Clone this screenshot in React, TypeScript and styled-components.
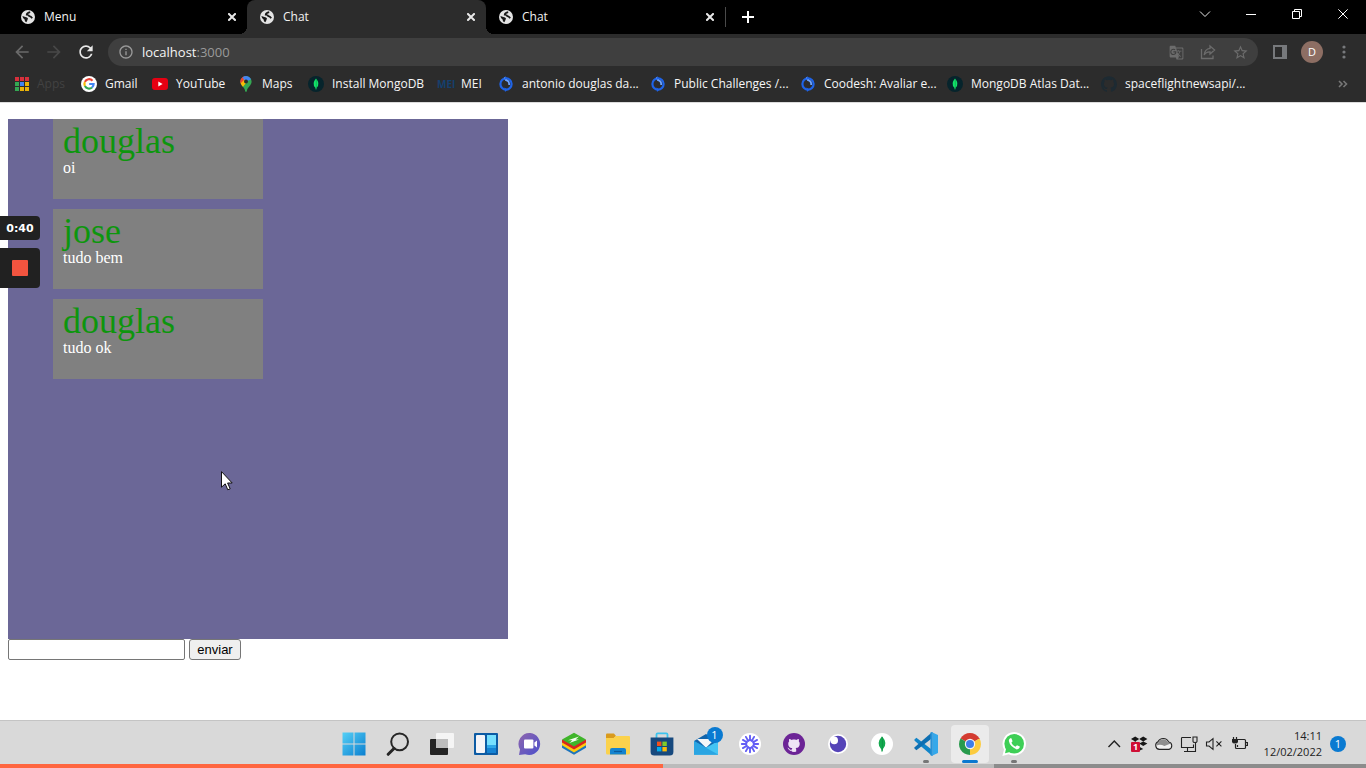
import React from "react";
import styled, { createGlobalStyle } from "styled-components";
import { SiGithub } from "react-icons/si";
import { MdGTranslate, MdStarBorder, MdRefresh, MdArrowBack, MdArrowForward, MdInfoOutline } from "react-icons/md";

const ui = `"Open Sans", "Noto Sans", sans-serif`;

const GlobalStyle = createGlobalStyle`
  *, *::before, *::after { box-sizing: border-box; }
  body { margin: 0; background: #fff; }
  button { font: inherit; color: inherit; }
`;

const Screen = styled.div`
  position: relative;
  min-height: 100vh;
  display: flex;
  flex-direction: column;
  font-family: ${ui};
`;

const TabStrip = styled.div`
  height: 34px;
  padding-left: 8px;
  display: flex;
  align-items: stretch;
  background: #000;
  color: #f2f2f2;
`;

const Tab = styled.div<{ $active?: boolean }>`
  position: relative;
  flex: 0 1 239px;
  display: flex;
  align-items: center;
  gap: 9px;
  padding: 0 7px 0 13px;
  font-size: 12px;
  line-height: 16px;
  background: ${(p) => (p.$active ? "#2c2c2c" : "transparent")};
  border-radius: 8px 8px 0 0;
  z-index: ${(p) => (p.$active ? 1 : 0)};
  &::before,
  &::after {
    content: "";
    display: ${(p) => (p.$active ? "block" : "none")};
    position: absolute;
    bottom: 0;
    width: 8px;
    height: 8px;
  }
  &::before {
    right: 100%;
    background: radial-gradient(circle at 0 0, transparent 8px, #2c2c2c 8px);
  }
  &::after {
    left: 100%;
    background: radial-gradient(circle at 100% 0, transparent 8px, #2c2c2c 8px);
  }
`;

const TabTitle = styled.span`
  flex: 1;
`;

const IconButton = styled.button<{ $w?: number; $h?: number; $color?: string }>`
  display: flex;
  align-items: center;
  justify-content: center;
  flex: none;
  width: ${(p) => p.$w ?? 16}px;
  height: ${(p) => p.$h ?? 16}px;
  padding: 0;
  border: 0;
  background: none;
  color: ${(p) => p.$color ?? "#e8e8e8"};
`;

const NewTab = styled.div`
  display: flex;
  align-items: center;
  padding-left: 14px;
`;

const TabDivider = styled.div`
  width: 1px;
  height: 20px;
  margin: 7px 0;
  background: #4a4a4a;
`;

const WindowControls = styled.div`
  display: flex;
  margin-left: auto;
`;

const Toolbar = styled.div`
  display: flex;
  align-items: center;
  height: 36px;
  padding: 0 6px;
  background: #2c2c2c;
`;

const Omnibox = styled.div`
  flex: 1;
  display: flex;
  align-items: center;
  height: 28px;
  margin: 0 6px;
  padding: 0 2px 0 10px;
  gap: 8px;
  border-radius: 14px;
  background: #3f3f3f;
  color: #9a9a9a;
`;

const Address = styled.div`
  flex: 1;
  font-size: 13px;
  line-height: 18px;
  b {
    font-weight: 400;
    color: #f4f4f4;
  }
`;

const Cluster = styled.div`
  display: flex;
`;

const Avatar = styled.span`
  width: 22px;
  height: 22px;
  border-radius: 50%;
  background: #8d6e63;
  color: #fff;
  font-size: 11px;
  line-height: 22px;
  text-align: center;
`;

const Bookmarks = styled.nav`
  display: flex;
  align-items: center;
  height: 33px;
  padding: 0 15px 4px 13px;
  background: #2c2c2c;
  border-bottom: 1px solid #dcdcdc;
`;

const Bookmark = styled.a<{ $w: number; $dim?: boolean }>`
  display: flex;
  align-items: center;
  flex: 0 0 ${(p) => p.$w}px;
  gap: 8px;
  color: ${(p) => (p.$dim ? "#424242" : "#f6f6f6")};
  font-size: 12px;
  line-height: 16px;
  white-space: nowrap;
  text-decoration: none;
  svg {
    flex: none;
  }
`;

const Overflow = styled.div`
  margin-left: auto;
`;

const Page = styled.main`
  flex: 1;
  padding: 16px 8px;
  background: #fff;
  font-family: "Liberation Serif", serif;
`;

const MessageList = styled.ul`
  display: flex;
  flex-direction: column;
  align-items: flex-start;
  gap: 10px;
  width: 500px;
  max-width: 100%;
  height: 520px;
  margin: 0;
  padding: 0 45px;
  overflow: auto;
  list-style: none;
  background: #6b6797;
`;

const Message = styled.li`
  width: 210px;
  height: 80px;
  padding: 4px 10px;
  background: #808080;
  color: #fff;
  font-size: 16px;
  line-height: 18px;
`;

const Author = styled.div`
  font-size: 36px;
  line-height: 36px;
  color: #0d960d;
`;

const SendForm = styled.form`
  display: flex;
  gap: 4px;
`;

const TextBox = styled.input`
  width: 177px;
  height: 21px;
  padding: 1px 2px;
  border: 1px solid #767676;
  border-radius: 2px;
  font: 13px "Liberation Sans", sans-serif;
`;

const SendButton = styled.button`
  width: 52px;
  height: 21px;
  padding: 0;
  border: 1px solid #767676;
  border-radius: 3px;
  background: #efefef;
  color: #000;
  font: 13px "Liberation Sans", sans-serif;
`;

const Recorder = styled.aside`
  position: absolute;
  left: 0;
  top: 216px;
  width: 40px;
  display: flex;
  flex-direction: column;
  gap: 8px;
`;

const Timer = styled.div`
  height: 24px;
  padding-top: 1px;
  border-radius: 0 4px 4px 0;
  background: #212121;
  color: #fff;
  font: 700 11px/23px "DejaVu Sans", sans-serif;
  text-align: center;
`;

const StopButton = styled.button`
  display: flex;
  align-items: center;
  justify-content: center;
  height: 40px;
  padding: 0;
  border: 0;
  border-radius: 0 4px 4px 0;
  background: #212121;
`;

const StopMark = styled.span`
  width: 16px;
  height: 16px;
  border-radius: 1px;
  background: #f2543f;
`;

const Pointer = styled.svg`
  position: absolute;
  left: 221px;
  top: 471px;
`;

const Taskbar = styled.footer`
  display: grid;
  grid-template-columns: 1fr auto 1fr;
  height: 44px;
  border-top: 1px solid #c4c4c4;
  background: #d9d9d9;
`;

const Apps = styled.div`
  grid-column: 2;
  display: flex;
  padding-left: 1px;
`;

const AppButton = styled.button<{ $state?: "open" | "active" }>`
  position: relative;
  display: flex;
  align-items: center;
  justify-content: center;
  width: 38px;
  height: 38px;
  margin: 4px 3px 0;
  padding: 0;
  border: 0;
  border-radius: 4px;
  background: ${(p) => (p.$state === "active" ? "#ebebeb" : "none")};
  &::after {
    content: "";
    display: ${(p) => (p.$state ? "block" : "none")};
    position: absolute;
    bottom: 0;
    width: ${(p) => (p.$state === "active" ? 16 : 6)}px;
    height: 3px;
    border-radius: 2px;
    background: ${(p) => (p.$state === "active" ? "#0a78d0" : "#777")};
  }
`;

const CountBadge = styled.span`
  position: absolute;
  right: 2px;
  top: 2px;
  width: 16px;
  height: 16px;
  border-radius: 50%;
  background: #0a7ad1;
  color: #fff;
  font-size: 11px;
  line-height: 16px;
  text-align: center;
`;

const Tray = styled.div`
  display: flex;
  align-items: center;
  justify-content: flex-end;
  padding: 3px 20px 0 0;
`;

const TrayIcons = styled.div`
  display: flex;
  gap: 5px;
  margin-right: 15px;
`;

const Clock = styled.time`
  color: #222;
  font-size: 11px;
  line-height: 16px;
  text-align: right;
`;

const Notice = styled.span`
  width: 16px;
  height: 16px;
  margin-left: 8px;
  border-radius: 50%;
  background: #0a7ad1;
  color: #fff;
  font-size: 11px;
  line-height: 16px;
  text-align: center;
`;

const Progress = styled.div`
  display: flex;
  height: 4px;
  background: #8c8c8c;
`;

const Segment = styled.div<{ $share: number; $color: string }>`
  width: ${(p) => p.$share}%;
  background: ${(p) => p.$color};
`;

const Globe = () => (
  <svg width="14" height="14" viewBox="0 0 14 14" aria-hidden="true">
    <circle cx="7" cy="7" r="7" fill="#e4e4e4" />
    <path
      d="M1.4 6L4.4 7Q6.4 7.2 7 8.6L6.4 10Q6.2 11.6 5.2 12.3Q3.6 11.6 3.6 9.6Q1.6 8.2 1.4 6Z"
      fill="#181818"
    />
    <path d="M9.2 2.2Q6 2.8 5.8 4.6Q8 4.8 8.4 6.2Q10 6.4 11.2 8.2" fill="none" stroke="#181818" strokeWidth="1.8" />
  </svg>
);

const Cross = ({ size = 8, w = 2 }: { size?: number; w?: number }) => (
  <svg width={size} height={size} viewBox="0 0 8 8" stroke="currentColor" strokeWidth={(w * 8) / size} aria-hidden="true">
    <path d="M0.3 0.3L7.7 7.7M7.7 0.3L0.3 7.7" />
  </svg>
);

const AppsGrid = () => {
  const colors = ["#d8303c", "#d8303c", "#d8303c", "#34a853", "#4285f4", "#eab308", "#34a853", "#eab308", "#eab308"];
  return (
    <svg width="16" height="16" viewBox="0 0 16 16">
      {colors.map((c, i) => (
        <rect key={i} x={2 + (i % 3) * 5} y={1 + Math.floor(i / 3) * 5} width="4" height="4" fill={c} />
      ))}
    </svg>
  );
};

const GoogleG = () => (
  <svg width="16" height="16" viewBox="0 0 16 16">
    <circle cx="8" cy="8" r="8" fill="#fff" />
    <g fill="none" strokeWidth="2.2">
      <path d="M11.5 4.7A4.6 4.6 0 0 0 3.9 5.9" stroke="#ea4335" />
      <path d="M3.9 5.9A4.6 4.6 0 0 0 3.9 10.1" stroke="#fbbc05" />
      <path d="M3.9 10.1A4.6 4.6 0 0 0 11 11.5" stroke="#34a853" />
      <path d="M11 11.5A4.6 4.6 0 0 0 12.6 8H8.2" stroke="#4285f4" />
    </g>
  </svg>
);

const YouTube = () => (
  <svg width="16" height="16" viewBox="0 0 16 16">
    <rect y="2" width="16" height="12" rx="3" fill="#e60012" />
    <path d="M6.3 5.5L10.6 8L6.3 10.5Z" fill="#fff" />
  </svg>
);

const MapPin = () => (
  <svg width="16" height="16" viewBox="0 0 16 16">
    <clipPath id="pin">
      <path d="M8 0A5.6 5.6 0 0 1 13.6 5.6C13.6 9.6 9.6 10.8 8.8 15.2Q8 16.6 7.2 15.2C6.4 10.8 2.4 9.6 2.4 5.6A5.6 5.6 0 0 1 8 0Z" />
    </clipPath>
    <g clipPath="url(#pin)">
      <rect width="16" height="16" fill="#34a853" />
      <path d="M0 0H8L3 6L0 8Z" fill="#ea4335" />
      <path d="M5 0H16L12 4L7 6L4.2 2.8Z" fill="#4285f4" />
      <path d="M0 9L6 3L8 7L4 12Z" fill="#fbbc05" />
      <path d="M0 0H4.2L6 4L2 8Z" fill="#ea4335" />
    </g>
    <circle cx="8" cy="5.6" r="2" fill="#2c2c2c" />
  </svg>
);

const Leaf = ({ size = 16, bg = "#06242c", fill = "#12e46a" }: { size?: number; bg?: string; fill?: string }) => (
  <svg width={size} height={size} viewBox="0 0 16 16">
    <circle cx="8" cy="8" r="8" fill={bg} />
    <path d="M8 2.4Q12.6 7.6 8.6 11.8L8.3 13.6H7.7L7.4 11.8Q3.4 7.6 8 2.4Z" fill={fill} />
    <path d="M8.3 3V13" stroke="#0a8f45" strokeWidth=".5" />
  </svg>
);

const Mei = () => (
  <svg width="16" height="16" viewBox="0 0 16 16" overflow="visible">
    <text x="0" y="12" fontFamily="Open Sans, sans-serif" fontSize="10" fontWeight="700" fill="#14406e">
      MEI
    </text>
  </svg>
);

const Coodesh = () => (
  <svg width="16" height="16" viewBox="0 0 16 16" fill="none">
    <circle cx="8" cy="8" r="5.6" stroke="#1f63e6" strokeWidth="2.2" />
    <path d="M6.8 1.2L8 4.2Q11.4 4.8 11.2 9" stroke="#6ea4ff" strokeWidth="1.8" />
    <path d="M7 .2L9.4 2.4L6.4 4Z" fill="#1f63e6" />
    <path d="M6.4 11.4L9.4 13.4L7 16Z" fill="#1f63e6" />
  </svg>
);

const Octocat = () => <SiGithub size={16} color="#1d2a32" />;

const StartLogo = () => (
  <svg width="24" height="24" viewBox="0 0 24 24">
    <linearGradient id="win" x1="0" y1="0" x2="1" y2="1">
      <stop stopColor="#55d0f6" />
      <stop offset="1" stopColor="#0a7fd0" />
    </linearGradient>
    <path d="M.5.5H11.5V11.5H.5ZM12.5.5H23.5V11.5H12.5ZM.5 12.5H11.5V23.5H.5ZM12.5 12.5H23.5V23.5H12.5Z" fill="url(#win)" />
  </svg>
);

const Search = () => (
  <svg width="24" height="24" viewBox="0 0 24 24" fill="none" stroke="#262626">
    <circle cx="13.6" cy="9.8" r="8.4" strokeWidth="2" />
    <path d="M8 16.5L2.2 22.3" strokeWidth="3" strokeLinecap="round" />
  </svg>
);

const TaskView = () => (
  <svg width="26" height="24" viewBox="0 0 26 24">
    <rect x="1" y="7" width="18" height="16" rx="1" fill="#242424" />
    <rect x="7" y="1" width="18" height="15" rx="1" fill="#f5f5f5" />
    <rect x="7" y="7" width="12" height="9" fill="#bdbdbd" />
  </svg>
);

const Widgets = () => (
  <svg width="24" height="24" viewBox="0 0 24 24">
    <rect y="1" width="24" height="22" rx="1" fill="#0c5ba4" />
    <rect x="2" y="3" width="9" height="18" rx="1" fill="#f4f4f8" />
    <rect x="13" y="3" width="9" height="10" fill="#76e0ff" />
    <rect x="13" y="13" width="9" height="3" fill="#2ea7e8" />
    <rect x="13" y="16" width="9" height="5" fill="#1583d4" />
  </svg>
);

const TeamsChat = () => (
  <svg width="24" height="24" viewBox="0 0 24 24">
    <linearGradient id="teams" x1="0" y1="0" x2="1" y2="1">
      <stop stopColor="#8f66ad" />
      <stop offset="1" stopColor="#4c50cc" />
    </linearGradient>
    <path d="M12.4 1A11 11 0 1 1 7.2 22.2L1 23L2 17.4A11 11 0 0 1 12.4 1Z" fill="url(#teams)" />
    <rect x="6" y="7.5" width="9.4" height="9" rx="1" fill="#fff" />
    <path d="M16.4 10.6L19 8.4V15.6L16.4 13.4Z" fill="#fff" />
  </svg>
);

const BlueStacks = () => (
  <svg width="24" height="24" viewBox="0 0 24 24">
    <path d="M0 15.8L12 22.8L24 15.8V12H0Z" fill="#1d75bd" />
    <path d="M0 13.2L12 20.4L24 13.2V10H0Z" fill="#ffca10" />
    <path d="M0 10.4L12 17.4L24 10.4V7.8H0Z" fill="#d7261e" />
    <path d="M0 7.6L12 .8L24 7.6L12 14.6Z" fill="#3fb52a" />
    <path d="M6 8.2L17 4.4L13.6 7.6L17 7.4L7.4 11L10.4 8.2Z" fill="#f4fff0" />
  </svg>
);

const Explorer = () => (
  <svg width="24" height="24" viewBox="0 0 24 24">
    <path d="M0 2.5Q0 1.5 1 1.5H8L10 4L8 6H0Z" fill="#d99a1d" />
    <path d="M0 6H7.6L10 4H23Q24 4 24 5V21Q24 22.5 22.5 22.5H1.5Q0 22.5 0 21Z" fill="#fbd24c" />
    <path d="M4 22.5V18Q4 16 6 16H18Q20 16 20 18V22.5Z" fill="#1584cf" />
    <path d="M8 19.5H16" stroke="#0b5a9c" strokeWidth="1.2" />
  </svg>
);

const Store = () => (
  <svg width="24" height="24" viewBox="0 0 24 24">
    <path d="M6.5 6V2.6Q6.5 1.4 7.7 1.4H16.3Q17.5 1.4 17.5 2.6V6" fill="none" stroke="#3cc3ee" strokeWidth="1.8" />
    <path d="M.6 5.5H23.4V20Q23.4 23.6 19.8 23.6H4.2Q.6 23.6 .6 20Z" fill="#17497e" />
    <path d="M7 9.6H11.4V14H7Z" fill="#f1511b" />
    <path d="M12.4 9.6H16.8V14H12.4Z" fill="#80cc28" />
    <path d="M7 15H11.4V19.4H7Z" fill="#00adef" />
    <path d="M12.4 15H16.8V19.4H12.4Z" fill="#fbbc09" />
  </svg>
);

const Mail = () => (
  <svg width="24" height="24" viewBox="0 0 24 24">
    <path d="M0 9L12 2L24 9V22.5H0Z" fill="#1265ac" />
    <path d="M3 7H21L12 15.8Z" fill="#f4f6f8" />
    <path d="M0 9L24 22.5H0Z" fill="#2fa4e4" />
    <path d="M24 9L0 22.5H24Z" fill="#43c4f4" />
    <path d="M0 9L24 22.5H0Z" fill="#2aa5e2" />
  </svg>
);

const Burst = () => (
  <svg width="22" height="22" viewBox="0 0 22 22">
    <circle cx="11" cy="11" r="11" fill="#fff" />
    {Array.from({ length: 12 }, (_, i) => (
      <path key={i} d="M11 7.4V2.8" stroke="#625df5" strokeWidth="1.9" strokeLinecap="round" transform={`rotate(${i * 30} 11 11)`} />
    ))}
    <circle cx="11" cy="11" r="4" fill="none" stroke="#625df5" strokeWidth="1.6" />
  </svg>
);

const GithubDesktop = () => (
  <svg width="22" height="22" viewBox="0 0 22 22">
    <circle cx="11" cy="11" r="11" fill="#6c2496" />
    <circle cx="11" cy="11" r="8" fill="#efe4f6" />
    <g transform="translate(2 2)">
      <SiGithub size={18} color="#6c2496" />
    </g>
  </svg>
);

const Insomnia = () => (
  <svg width="20" height="20" viewBox="0 0 20 20">
    <circle cx="10" cy="10" r="10" fill="#fff" />
    <circle cx="10" cy="10" r="8.2" fill="#5544b8" />
    <circle cx="6.2" cy="6.4" r="3.8" fill="#fff" />
  </svg>
);

const VsCode = () => (
  <svg width="24" height="24" viewBox="0 0 24 24">
    <path d="M.4 7.6L2.4 5.8L18 17.8V23.8L.6 8.8Z" fill="#1184c8" />
    <path d="M.4 16.4L2.4 18.2L18 6.2V.2L.6 15.2Z" fill="#0e6fb2" />
    <path d="M17.4 0L24 3V21L17.4 24Q18.4 23.4 18.4 22V2Q18.4.6 17.4 0Z" fill="#35a8ea" />
    <path d="M16.4.6L18.6 0V24L16.4 23.2Z" fill="#2592d8" />
  </svg>
);

const Chrome = () => (
  <svg width="22" height="22" viewBox="0 0 22 22">
    <path d="M11 11L1.5 5.5A11 11 0 0 1 20.5 5.5Z" fill="#d33b30" />
    <path d="M11 11L20.5 5.5A11 11 0 0 1 11 22Z" fill="#fccb3e" />
    <path d="M11 11L11 22A11 11 0 0 1 1.5 5.5Z" fill="#279a4c" />
    <path d="M11 6H20.7L20.5 5.5H11Z" fill="#d33b30" />
    <path d="M6.7 13.5L1.5 5.5L6 11Z" fill="#279a4c" />
    <path d="M15.3 13.5L11 22L11 16Z" fill="#fccb3e" />
    <circle cx="11" cy="11" r="5.2" fill="#f4f4f4" />
    <circle cx="11" cy="11" r="4" fill="#3f7ee8" />
  </svg>
);

const WhatsApp = () => (
  <svg width="24" height="24" viewBox="0 0 24 24">
    <path d="M12.2 0A11.8 11.8 0 1 1 6.6 22.2L.4 24L2 17.6A11.8 11.8 0 0 1 12.2 0Z" fill="#fff" />
    <circle cx="12.2" cy="11.8" r="9.8" fill="#3ecf56" />
    <path d="M3 21.2L4.2 16L8 20Z" fill="#3ecf56" />
    <path
      d="M8.2 6.2Q7 6.8 6.8 8.8Q8 14.8 14.8 17.4Q17.6 17.2 17.8 14.6L15 13.2L13.4 14.8Q10.6 13.6 9.4 10.8L10.6 9.2L9.4 6.2Z"
      fill="#fff"
    />
  </svg>
);

const ChevronUp = () => (
  <svg width="20" height="20" viewBox="0 0 20 20" fill="none" stroke="#222" strokeWidth="1.4">
    <path d="M4.5 13L10.3 7L16 13" />
  </svg>
);

const Dropbox = () => (
  <svg width="20" height="20" viewBox="0 0 20 20">
    <path
      d="M2 5L6.2 2.6L10.2 5L6.2 7.4ZM10.2 5L14.2 2.6L18.4 5L14.2 7.4ZM10.2 9.6L14.2 7.4L18.4 9.6L14.2 12ZM2 9.6L6.2 7.4L10.2 9.6ZM10.8 13L14.2 15L10.8 16.4Z"
      fill="#161616"
    />
    <rect x="2" y="8" width="9" height="10" rx="1" fill="#cf0f35" />
    <text x="6.5" y="16.2" textAnchor="middle" fontFamily="Open Sans, sans-serif" fontSize="9" fontWeight="700" fill="#fff">
      1
    </text>
  </svg>
);

const Cloud = () => (
  <svg width="20" height="20" viewBox="0 0 20 20" stroke="#222" strokeWidth="1.1">
    <path d="M5.4 15.4A4 4 0 0 1 4 7.8A5.8 5.8 0 0 1 14.6 8A3.8 3.8 0 0 1 15 15.4Z" fill="#f0f0f0" />
    <path d="M2.8 11.6Q2.4 9 4.4 8.2A5.3 5.3 0 0 1 14 8.2Q15.8 8.4 16.8 9.6L10.4 12Q6 9.6 2.8 11.6Z" fill="#8e8e8e" stroke="none" />
  </svg>
);

const Monitor = () => (
  <svg width="20" height="20" viewBox="0 0 20 20" fill="none" stroke="#222" strokeWidth="1.1">
    <path d="M12 3.5H3.2Q2.5 3.5 2.5 4.2V13.5H14.5V10.5M8.5 13.5V17M5 17.5H16.5V8.5" />
    <path d="M14 3H18V7.5Q18 8.5 16 8.5Q14 8.5 14 7.5Z" />
  </svg>
);

const Speaker = () => (
  <svg width="20" height="20" viewBox="0 0 20 20" fill="none" stroke="#222" strokeWidth="1.1">
    <path d="M2.5 8H5L9 4.6V15.4L5 12H2.5ZM12.4 7.4L17.4 12.4M17.4 7.4L12.4 12.4" />
  </svg>
);

const Battery = () => (
  <svg width="20" height="20" viewBox="0 0 20 20" fill="none" stroke="#222" strokeWidth="1.2">
    <path d="M9 5.5H15.5Q16.5 5.5 16.5 6.5V13.5Q16.5 14.5 15.5 14.5H7.5Q6.5 14.5 6.5 13.5V10" />
    <path d="M17 8.5H18.4V11.5H17M4.5 3V5M7.5 3V5" />
    <path d="M3 5H9V8Q8.6 9.6 6 9.6Q3.4 9.6 3 8Z" fill="#222" stroke="none" />
    <path d="M8.5 11V13" />
  </svg>
);

const tabs = [{ title: "Menu" }, { title: "Chat", active: true }, { title: "Chat" }];

const bookmarks = [
  { label: "Apps", icon: <AppsGrid />, w: 68, dim: true },
  { label: "Gmail", icon: <GoogleG />, w: 71 },
  { label: "YouTube", icon: <YouTube />, w: 86 },
  { label: "Maps", icon: <MapPin />, w: 70 },
  { label: "Install MongoDB", icon: <Leaf />, w: 129 },
  { label: "MEI", icon: <Mei />, w: 61 },
  { label: "antonio douglas da...", icon: <Coodesh />, w: 152 },
  { label: "Public Challenges /...", icon: <Coodesh />, w: 150 },
  { label: "Coodesh: Avaliar e...", icon: <Coodesh />, w: 147 },
  { label: "MongoDB Atlas Dat...", icon: <Leaf />, w: 154 },
  { label: "spaceflightnewsapi/...", icon: <Octocat />, w: 140 },
];

const messages = [
  { author: "douglas", text: "oi" },
  { author: "jose", text: "tudo bem" },
  { author: "douglas", text: "tudo ok" },
];

type App = { name: string; icon: React.ReactNode; state?: "open" | "active"; count?: number };

const apps: App[] = [
  { name: "Iniciar", icon: <StartLogo /> },
  { name: "Pesquisar", icon: <Search /> },
  { name: "Visão de tarefas", icon: <TaskView /> },
  { name: "Widgets", icon: <Widgets /> },
  { name: "Bate-papo", icon: <TeamsChat /> },
  { name: "BlueStacks", icon: <BlueStacks /> },
  { name: "Explorador de arquivos", icon: <Explorer /> },
  { name: "Microsoft Store", icon: <Store /> },
  { name: "Email", icon: <Mail />, count: 1 },
  { name: "Loom", icon: <Burst /> },
  { name: "GitHub Desktop", icon: <GithubDesktop /> },
  { name: "Insomnia", icon: <Insomnia /> },
  { name: "MongoDB Compass", icon: <Leaf size={22} bg="#fff" fill="#14a94f" /> },
  { name: "Visual Studio Code", icon: <VsCode />, state: "open" },
  { name: "Chrome", icon: <Chrome />, state: "active" },
  { name: "WhatsApp", icon: <WhatsApp />, state: "open" },
];

export default function App() {
  return (
    <Screen>
      <GlobalStyle />
      <TabStrip>
        {tabs.map((t, i) => (
          <Tab key={i} $active={t.active}>
            <Globe />
            <TabTitle>{t.title}</TabTitle>
            <IconButton aria-label="Fechar guia">
              <Cross />
            </IconButton>
          </Tab>
        ))}
        <TabDivider />
        <NewTab>
          <IconButton aria-label="Nova guia">
            <svg width="12" height="12" viewBox="0 0 12 12" stroke="#fff" strokeWidth="2">
              <path d="M6 0V12M0 6H12" />
            </svg>
          </IconButton>
        </NewTab>
        <WindowControls>
          <IconButton $w={46} $h={28} aria-label="Pesquisar guias">
            <svg width="12" height="8" viewBox="0 0 12 8" fill="none" stroke="currentColor" strokeWidth="1">
              <path d="M1 1.5L6 6.5L11 1.5" />
            </svg>
          </IconButton>
          <IconButton $w={46} $h={28} aria-label="Minimizar">
            <svg width="10" height="10" viewBox="0 0 10 10" stroke="#fff">
              <path d="M0 5.5H10" />
            </svg>
          </IconButton>
          <IconButton $w={46} $h={28} aria-label="Restaurar">
            <svg width="10" height="10" viewBox="0 0 10 10" fill="none" stroke="#fff">
              <path d="M.5 2.5H7.5V9.5H.5ZM2.5 2.5V.5H9.5V7.5H7.5" />
            </svg>
          </IconButton>
          <IconButton $w={46} $h={28} $color="#fff" aria-label="Fechar">
            <Cross size={10} w={1} />
          </IconButton>
        </WindowControls>
      </TabStrip>

      <Toolbar>
        <IconButton $w={32} $h={28} $color="#6a6a6a" aria-label="Voltar">
          <MdArrowBack size={20} />
        </IconButton>
        <IconButton $w={32} $h={28} $color="#484848" aria-label="Avançar">
          <MdArrowForward size={20} />
        </IconButton>
        <IconButton $w={32} $h={28} aria-label="Recarregar">
          <MdRefresh size={20} />
        </IconButton>
        <Omnibox>
          <MdInfoOutline size={16} />
          <Address>
            <b>localhost</b>:3000
          </Address>
          <Cluster>
            <IconButton $w={32} $h={28} $color="#6c6c6c" aria-label="Traduzir">
              <MdGTranslate size={15} />
            </IconButton>
            <IconButton $w={32} $h={28} $color="#6c6c6c" aria-label="Compartilhar">
              <svg width="16" height="16" viewBox="0 0 16 16" fill="none" stroke="currentColor" strokeWidth="1.3">
                <path d="M1.5 5V14.5H13V11.5M10 2L14.6 6L10 10V7.8Q6 7.6 4.2 11Q4.8 5 10 4.4Z" />
              </svg>
            </IconButton>
            <IconButton $w={32} $h={28} $color="#6c6c6c" aria-label="Favoritar">
              <MdStarBorder size={17} />
            </IconButton>
          </Cluster>
        </Omnibox>
        <IconButton $w={32} $h={28} $color="#77797c" aria-label="Painel lateral">
          <svg width="14" height="14" viewBox="0 0 14 14" fill="currentColor">
            <path d="M0 0H14V14H0ZM2 2V12H9V2Z" fillRule="evenodd" />
          </svg>
        </IconButton>
        <IconButton $w={32} $h={28} aria-label="Perfil">
          <Avatar>D</Avatar>
        </IconButton>
        <IconButton $w={32} $h={28} $color="#77797c" aria-label="Menu">
          <svg width="4" height="14" viewBox="0 0 4 14" fill="currentColor">
            <circle cx="2" cy="2" r="1.6" />
            <circle cx="2" cy="7" r="1.6" />
            <circle cx="2" cy="12" r="1.6" />
          </svg>
        </IconButton>
      </Toolbar>

      <Bookmarks>
        {bookmarks.map((b) => (
          <Bookmark key={b.label} href="#" $w={b.w} $dim={b.dim}>
            {b.icon}
            {b.label}
          </Bookmark>
        ))}
        <Overflow>
          <IconButton $color="#777" aria-label="Mais favoritos">
            <svg width="10" height="8" viewBox="0 0 10 8" fill="none" stroke="currentColor" strokeWidth="1.6">
              <path d="M1 1L4 4L1 7M5.5 1L8.5 4L5.5 7" />
            </svg>
          </IconButton>
        </Overflow>
      </Bookmarks>

      <Page>
        <MessageList>
          {messages.map((m, i) => (
            <Message key={i}>
              <Author>{m.author}</Author>
              {m.text}
            </Message>
          ))}
        </MessageList>
        <SendForm onSubmit={(e) => e.preventDefault()}>
          <TextBox aria-label="Mensagem" />
          <SendButton>enviar</SendButton>
        </SendForm>
      </Page>

      <Taskbar>
        <Apps>
          {apps.map((a) => (
            <AppButton key={a.name} $state={a.state} aria-label={a.name}>
              {a.icon}
              {a.count && <CountBadge>{a.count}</CountBadge>}
            </AppButton>
          ))}
        </Apps>
        <Tray>
          <TrayIcons>
            <ChevronUp />
            <Dropbox />
            <Cloud />
            <Monitor />
            <Speaker />
            <Battery />
          </TrayIcons>
          <Clock>
            14:11
            <br />
            12/02/2022
          </Clock>
          <Notice>1</Notice>
        </Tray>
      </Taskbar>
      <Progress>
        <Segment $share={48.5} $color="#ff6640" />
        <Segment $share={24.3} $color="#bbb" />
      </Progress>

      <Recorder>
        <Timer>0:40</Timer>
        <StopButton aria-label="Parar gravação">
          <StopMark />
        </StopButton>
      </Recorder>
      <Pointer width="12" height="20" viewBox="0 0 12 20" aria-hidden="true">
        <path d="M.5.6V16.2L4.2 12.8L6.8 18.8L9.2 17.8L6.6 12H11.2Z" fill="#fff" stroke="#111" strokeWidth="1" />
      </Pointer>
    </Screen>
  );
}
